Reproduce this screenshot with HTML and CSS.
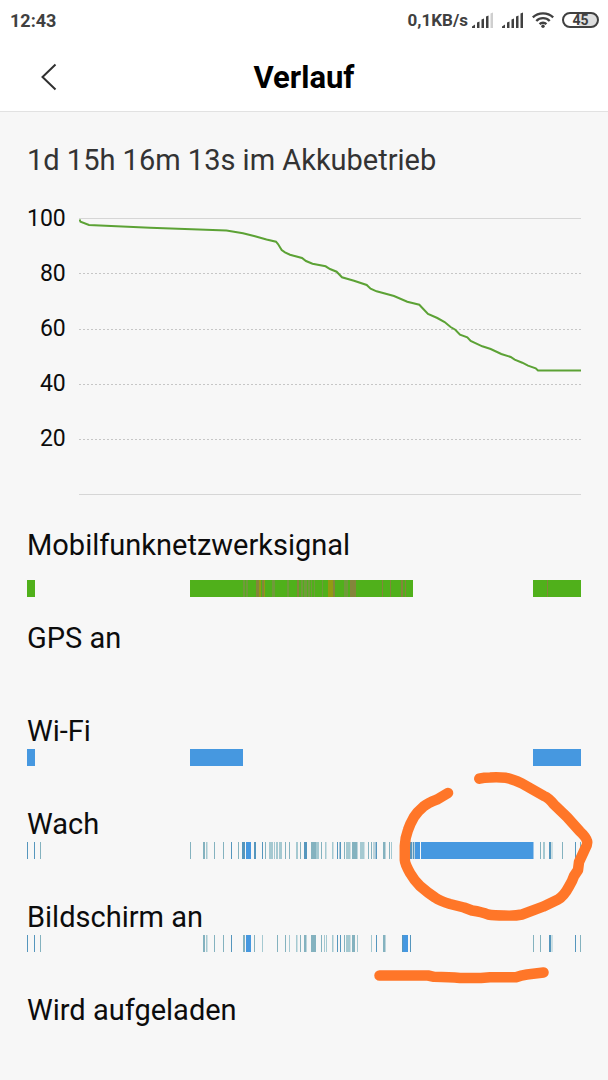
FILE: index.html
```html
<!DOCTYPE html>
<html lang="de">
<head>
<meta charset="utf-8">
<meta name="viewport" content="width=device-width, initial-scale=1">
<title>Verlauf</title>
<link rel="stylesheet" href="styles.css">
</head>
<body>
<div class="status">
  <time class="clock">12:43</time>
  <div class="status-right">
    <span>0,1KB/s</span>
    <svg class="signal" width="22" height="16" viewBox="0 0 22 16" aria-hidden="true">
      <path d="M0 16v-1.500l3-2v3.500zM5 16v-5.500l2.500-1V16zM9.500 16V7.500l2.500-1V16zM14 16V4.500l2.500-1V16z"/>
      <path class="faint" d="M18.500 16V1.500l2.500-1V16z"/>
    </svg>
    <svg class="signal second" width="22" height="16" viewBox="0 0 22 16" aria-hidden="true">
      <path d="M0 16v-1.500l3-2v3.500zM5 16v-5.500l2.500-1V16zM9.500 16V7.500l2.500-1V16zM14 16V4.500l2.500-1V16zM18.500 16V1.500l2.500-1V16z"/>
    </svg>
    <svg class="wifi" width="22" height="16" viewBox="0 0 22 16" aria-hidden="true">
      <path d="M.8 5.300C6.500 0 15.500 0 21.200 5.300M4.300 9C8 5.200 14 5.200 17.700 9M7.600 12.200C9.500 10.200 12.500 10.200 14.400 12.200"/>
      <circle cx="11" cy="14.200" r="1.700"/>
    </svg>
    <span class="battery">45</span>
  </div>
</div>
<header class="bar">
  <button class="back" type="button" aria-label="Zurück">
    <svg width="16" height="28" viewBox="0 0 16 28" aria-hidden="true"><path d="M14.500 1.500 1.500 14l13 12.500"/></svg>
  </button>
  <h1 class="title">Verlauf</h1>
</header>
<main class="content">
  <h2 class="label duration">1d 15h 16m 13s im Akkubetrieb</h2>
  <div class="chart">
    <div class="axis"><span>100</span><span>80</span><span>60</span><span>40</span><span>20</span></div>
    <svg class="plot" viewBox="79 218 502 277" preserveAspectRatio="none" role="img" aria-label="Akkustand">
      <path class="edge" d="M79 218.500H581M79 494.500H581"/>
      <path class="grid" d="M79 273.500H581M79 329.500H581M79 384.500H581M79 439.500H581"/>
      <path class="level" d="M79.500 219.500 80.500 221.800 89 225 150 227.700 226.500 230.500 243 233.300 255 236.300 266.500 239.500 276 241.700 278 244 281.700 250 285 252.300 290 254.700 302 258 306 261 312.500 263.700 325.600 266.300 330 269 336.600 271.700 342 277.300 354 280.700 366.700 285 370.600 288.700 376.600 291.300 394 296 407.300 301.700 419.300 304.700 428 314 437.300 318 444.600 322 450.600 327 455.300 329.700 460 334.700 467.300 337.300 470.700 341 482.300 346.300 490.700 349 501.300 354 510.700 357 514.700 359.700 522.300 362.700 528 365.700 535.700 368.300 538 370.500H581"/>
    </svg>
  </div>
  <div class="rows">
    <section class="row">
      <h2 class="label">Mobilfunknetzwerksignal</h2>
      <svg class="strip spaced" viewBox="27 0 554 17" preserveAspectRatio="none" aria-hidden="true">
        <path class="green" d="M27 0h8v17h-8zM190 0h223v17H190zM533 0h48v17h-48z"/>
        <path class="mix soft" d="M243 0h2v17h-2zM246 0h2v17h-2zM272 0h3v17h-3zM287 0h2v17h-2zM301 0h2v17h-2zM304 0h3v17h-3zM308 0h2v17h-2zM311 0h1v17h-1zM314 0h1v17h-1zM322 0h1v17h-1zM344 0h4v17h-4z"/>
        <path class="mix brown" d="M256 0h3v17h-3zM262 0h2v17h-2zM297 0h2v17h-2zM333 0h2v17h-2zM350 0h6v17h-6zM382 0h1v17h-1zM390 0h1v17h-1zM401 0h2v17h-2zM405 0h1v17h-1zM547 0h1v17h-1z"/>
        <path class="mix olive" d="M259 0h2v17h-2zM264 0h1v17h-1zM328 0h5v17h-5z"/>
      </svg>
    </section>
    <section class="row">
      <h2 class="label">GPS an</h2>
    </section>
    <section class="row">
      <h2 class="label">Wi-Fi</h2>
      <svg class="strip" viewBox="27 0 554 17" preserveAspectRatio="none" aria-hidden="true">
        <path class="blue" d="M27 0h8v17h-8zM190 0h53v17h-53zM533 0h48v17h-48z"/>
      </svg>
    </section>
    <section class="row">
      <h2 class="label">Wach</h2>
      <svg class="strip" viewBox="27 0 554 17" preserveAspectRatio="none" aria-hidden="true">
        <path class="blue" d="M246 0h5v17h-5zM415 0h5v17h-5zM421 0h112.500v17H421z"/>
        <path class="dark" d="M27 0h1v17h-1zM34 0h1v17h-1zM231 0h1v17h-1zM242 0h3v17h-3zM254 0h2v17h-2zM262 0h1v17h-1zM304 0h3v17h-3zM337 0h1v17h-1zM339.500 0h1.500v17h-1.500zM375.500 0h1.500v17h-1.500zM410 0h2v17h-2zM412.700 0h1.700v17h-1.700zM549 0h2v17h-2zM575 0h1v17h-1z"/>
        <path class="teal" d="M40 0h1v17h-1zM190 0h1v17h-1zM203 0h2v17h-2zM214 0h1v17h-1zM223 0h1v17h-1zM238 0h1v17h-1zM265 0h1v17h-1zM285 0h1v17h-1zM289 0h1v17h-1zM300 0h1v17h-1zM311 0h5v17h-5zM321 0h1v17h-1zM344 0h1v17h-1zM352 0h5.500v17H352zM368 0h1v17h-1zM371 0h1v17h-1zM373.500 0h1v17h-1zM383 0h2.500v17H383zM389 0h1v17h-1zM540 0h1v17h-1zM562 0h1v17h-1zM580 0h1v17h-1z"/>
        <path class="light" d="M206 0h1.500v17H206zM269 0h4v17h-4zM274 0h1v17h-1zM276 0h2v17h-2zM279 0h3v17h-3zM296 0h2v17h-2zM316 0h3v17h-3zM325 0h1.500v17H325zM332 0h1.500v17H332zM346 0h4.500v17H346zM360 0h4.500v17H360zM391 0h1v17h-1zM543 0h2v17h-2zM551.500 0h1v17h-1z"/>
      </svg>
    </section>
    <section class="row">
      <h2 class="label">Bildschirm an</h2>
      <svg class="strip" viewBox="27 0 554 17" preserveAspectRatio="none" aria-hidden="true">
        <path class="blue" d="M246 0h5v17h-5zM403 0h5v17h-5z"/>
        <path class="dark" d="M27 0h1v17h-1zM34 0h1v17h-1zM231 0h1v17h-1zM337 0h1v17h-1zM340 0h1v17h-1zM376 0h1v17h-1zM402 0h1v17h-1zM410 0h1v17h-1zM549 0h2v17h-2zM575 0h1v17h-1z"/>
        <path class="teal" d="M40 0h1v17h-1zM203 0h2v17h-2zM214 0h1v17h-1zM223 0h1v17h-1zM243 0h2v17h-2zM254 0h1v17h-1zM277 0h1v17h-1zM285 0h1v17h-1zM300 0h1v17h-1zM304 0h2.500v17H304zM311 0h5v17h-5zM321 0h1v17h-1zM344 0h1v17h-1zM352 0h3v17h-3zM383 0h2.500v17H383zM533 0h1v17h-1zM540 0h1v17h-1zM580 0h1v17h-1z"/>
        <path class="light" d="M206 0h1.500v17H206zM262 0h1v17h-1zM289 0h1v17h-1zM296 0h1.500v17H296zM324 0h1v17h-1zM326 0h1v17h-1zM332 0h1.500v17H332zM346 0h4.500v17H346zM357 0h1v17h-1zM371 0h1v17h-1zM551.500 0h1v17h-1z"/>
      </svg>
    </section>
    <section class="row">
      <h2 class="label">Wird aufgeladen</h2>
    </section>
    <svg class="marker" viewBox="27 527 554 558" preserveAspectRatio="none" aria-hidden="true">
      <path d="M448 793 436.700 799.700Q428 803 423.300 806.700 417 812 414 817 410 824 408 830 405 838 404.800 846V860Q405 864 410 873 414 880 420 886 428 893 435 897.500 440 901 450 904L464 907.500 472 910.500Q482 912 488 914.500 494 915.500 504 915.500 515 916 522 914.500L543 906.700 558 899.500Q564 896 569 886.500L572 881 574 876 578 870 579 862 585 849Q588 844 587 841 586 837 580 831.500L567 817 554 804.500Q549 798 544 796L522 783.500Q512 779 506 777.800 498 777 490 777.500 484 777.500 479.300 778.700"/>
      <path d="M379.500 975.500H428L434 976.800Q450 977 460 978H481L490 977.300H516Q521 975.500 527 974.500L543.500 972.500"/>
    </svg>
  </div>
</main>
</body>
</html>
```
FILE: styles.css
```css
* { box-sizing: border-box; }

body {
  margin: 0;
  min-height: 100vh;
  background: #f7f7f7;
  color: #0c0c0c;
  font-family: Roboto, "Noto Sans", sans-serif;
}

.status {
  display: flex;
  justify-content: space-between;
  align-items: center;
  height: 42px;
  padding: 0 9px 2px 10px;
  background: #fff;
  color: #404040;
  font-size: 18px;
  font-weight: 700;
}

.status-right {
  display: flex;
  align-items: center;
  font-size: 17px;
}

.signal { margin-left: 4px; fill: #404040; }
.signal.second { margin-left: 8px; }
.signal .faint { fill: #cfcfcf; }

.wifi {
  margin-left: 8px;
  fill: none;
  stroke: #404040;
  stroke-width: 2.4;
}
.wifi circle { fill: #404040; stroke: none; }

.battery {
  width: 37px;
  height: 16px;
  margin-left: 8px;
  border: 2px solid #404040;
  border-radius: 8px;
  background: linear-gradient(90deg, #fff 45%, #dedede 45%);
  font-size: 14px;
  line-height: 12px;
  text-align: center;
}

.bar {
  display: grid;
  grid-template-columns: 72px 1fr 72px;
  align-items: center;
  height: 70px;
  background: #fff;
  border-bottom: 1px solid #e2e2e2;
}

.back {
  justify-self: end;
  display: flex;
  margin: 0;
  padding: 0 15px 0 8px;
  border: 0;
  background: none;
}
.back svg { fill: none; stroke: #303030; stroke-width: 2; }

.title {
  margin: 0;
  padding-top: 2px;
  color: #000;
  font-size: 31px;
  font-weight: 700;
  text-align: center;
}

.content { padding: 30px 27px 16px; }

.label {
  margin: 0;
  font-size: 29px;
  font-weight: 400;
  line-height: 36px;
}
.duration { color: #333; }

.chart {
  display: grid;
  grid-template-columns: 38px 1fr;
  column-gap: 14px;
  margin-top: 12px;
}

.axis {
  display: grid;
  grid-auto-rows: 55px;
  align-items: center;
  padding-top: 1px;
  font-size: 23px;
  text-align: right;
}

.plot {
  display: block;
  width: 100%;
  height: 277px;
  margin-top: 28px;
}
.plot path { fill: none; }
.edge { stroke: #d6d6d6; }
.grid { stroke: #c6c6c6; stroke-dasharray: 2 2; }
.level { stroke: #5ca235; stroke-width: 2; }

.rows {
  position: relative;
  display: grid;
  grid-auto-rows: minmax(93px, auto);
  margin-top: 32px;
}

.strip {
  display: block;
  width: 100%;
  height: 17px;
}
.spaced { margin-top: 17px; }

.green { fill: #50b01b; }
.soft { fill: #709a3a; }
.brown { fill: #84853b; }
.olive { fill: #929b12; }
.blue { fill: #4698e0; }
.dark { fill: #5596bd; }
.teal { fill: #84b2bf; }
.light { fill: #a5c9d1; }

.marker {
  position: absolute;
  top: 0;
  left: 0;
  width: 100%;
  height: 558px;
  overflow: visible;
  pointer-events: none;
  fill: none;
  stroke: #ff7628;
  stroke-width: 10.500;
  stroke-linecap: round;
  stroke-linejoin: round;
}
```
